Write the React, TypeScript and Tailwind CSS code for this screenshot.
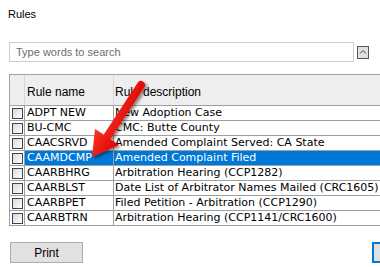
const rules = [
  { name: "ADPT NEW", description: "New Adoption Case" },
  { name: "BU-CMC", description: "CMC: Butte County" },
  { name: "CAACSRVD", description: "Amended Complaint Served: CA State" },
  { name: "CAAMDCMP", description: "Amended Complaint Filed", selected: true },
  { name: "CAARBHRG", description: "Arbitration Hearing (CCP1282)" },
  { name: "CAARBLST", description: "Date List of Arbitrator Names Mailed (CRC1605)" },
  { name: "CAARBPET", description: "Filed Petition - Arbitration (CCP1290)" },
  { name: "CAARBTRN", description: "Arbitration Hearing (CCP1141/CRC1600)" },
];

function CheckBox() {
  return (
    <div className="w-[11px] h-[11px] border border-[#3a4658] bg-gradient-to-br from-[#d9d9d9] to-white"></div>
  );
}

function RedArrow() {
  return (
    <svg className="absolute inset-0 pointer-events-none" width="380" height="267" viewBox="0 0 380 267">
      <defs>
        <filter id="shadow" x="-20%" y="-20%" width="140%" height="140%">
          <feDropShadow dx="2" dy="2" stdDeviation="1.5" floodColor="#000" floodOpacity="0.45" />
        </filter>
        <linearGradient id="red" x1="0" y1="0" x2="1" y2="0.6">
          <stop offset="0" stopColor="#ff3a2a" />
          <stop offset="1" stopColor="#d80000" />
        </linearGradient>
      </defs>
      <g filter="url(#shadow)" fill="url(#red)">
        <line x1="141" y1="85" x2="107" y2="137" stroke="url(#red)" strokeWidth="8" strokeLinecap="round" />
        <polygon points="95,129 119,145 92,157" />
      </g>
    </svg>
  );
}

export default function App() {
  return (
    <div className="relative w-[380px] h-[267px] overflow-hidden bg-white" style={{ fontFamily: '"Liberation Sans", Arial, sans-serif' }}>
      {/* Title */}
      <div className="pl-[8px] pt-[7px] h-[14px] box-content text-[11px] leading-[14px] text-black">Rules</div>

      {/* Search */}
      <div className="mt-[21px] flex items-center h-[20px]">
        <div className="ml-[9px] w-[345px] h-[20px] border border-[#cccccc] flex items-center pl-[6px] text-[11px] text-[#6d6d6d]">
          Type words to search
        </div>
        <div className="ml-[3px] w-[12px] h-[13px] border border-[#555555] bg-[#e1e1e1] flex items-center justify-center">
          <svg width="8" height="6" viewBox="0 0 8 6">
            <path d="M1 4.5 L4 1.5 L7 4.5" fill="none" stroke="#444" strokeWidth="1" />
          </svg>
        </div>
      </div>

      {/* Table */}
      <div className="mt-[12px] ml-[9px] w-[400px] border-l border-[#a0a0a0]">
        <div className="grid grid-cols-[15px_89px_1fr] h-[32px] bg-[#eeeeee] border-t border-b border-[#a0a0a0] text-[12px] text-black">
          <div className="border-r border-[#d9d9d9]"></div>
          <div className="border-r border-[#d9d9d9] pl-[2px] flex items-center pt-[3px]">Rule name</div>
          <div className="pl-[1px] flex items-center pt-[3px]">Rule description</div>
        </div>
        {rules.map((rule, i) => (
          <div
            key={i}
            className="grid grid-cols-[15px_89px_1fr] h-[15px] border-b border-[#a0a0a0] text-[11px] leading-[14px]"
            style={{ fontFamily: '"DejaVu Sans", Verdana, sans-serif' }}
          >
            <div className="border-r border-[#a0a0a0] flex items-center pl-[2px] bg-white">
              <CheckBox />
            </div>
            <div className={rule.selected ? "border-r border-[#a0a0a0] pl-[2px] bg-[#0078d7] text-white" : "border-r border-[#a0a0a0] pl-[2px] text-black"}>
              {rule.name}
            </div>
            <div className={rule.selected ? "pl-[1px] bg-[#0078d7] text-white whitespace-nowrap" : "pl-[1px] text-black whitespace-nowrap"}>
              {rule.description}
            </div>
          </div>
        ))}
      </div>

      {/* Buttons */}
      <div className="mt-[16px] flex items-center h-[21px]">
        <button className="ml-[10px] w-[73px] h-[21px] border border-[#adadad] bg-[#e1e1e1] text-[12px] text-black">Print</button>
        <button className="ml-auto mr-[-20px] w-[28px] h-[21px] border-2 border-[#0078d7] bg-[#e1e1e1]"></button>
      </div>

      <RedArrow />
    </div>
  );
}
